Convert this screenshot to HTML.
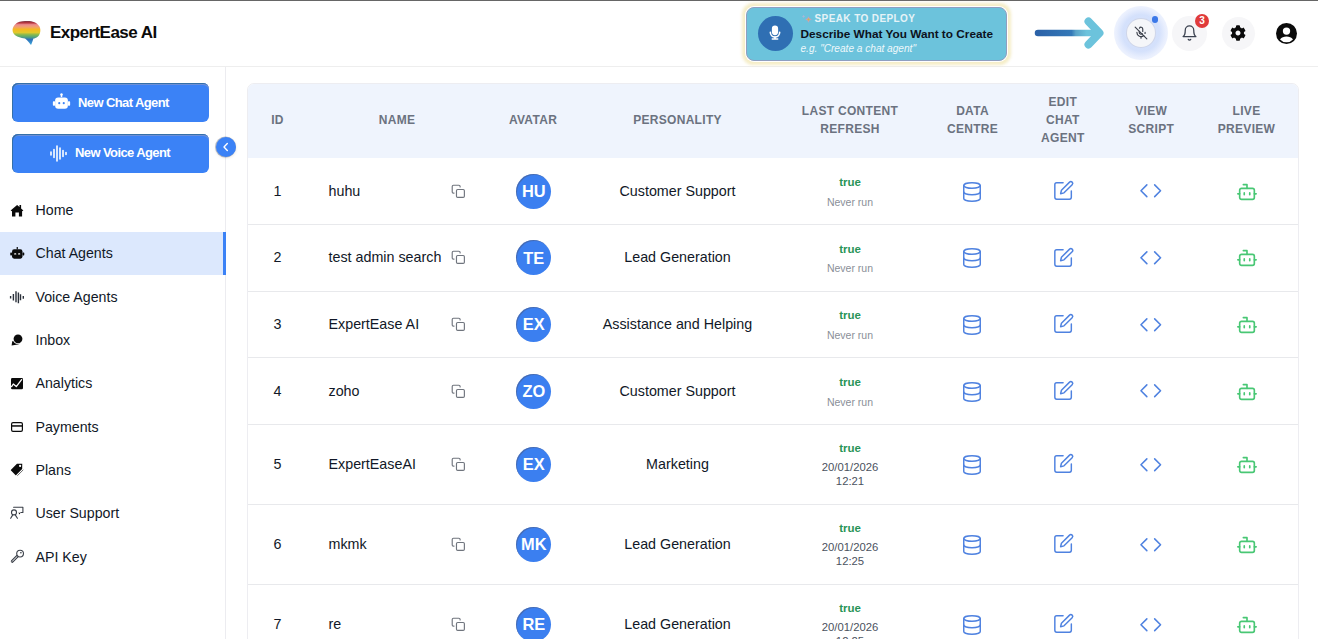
<!DOCTYPE html>
<html><head><meta charset="utf-8">
<style>
*{margin:0;padding:0;box-sizing:border-box}
html,body{width:1318px;height:639px;overflow:hidden;background:#fff;font-family:"Liberation Sans",sans-serif;color:#111827}
.t{position:absolute;white-space:nowrap}
.a{position:absolute}
svg{position:absolute;overflow:visible}
</style></head><body>
<div class="a" style="left:0;top:0;width:1318px;height:1px;background:#666"></div>
<div class="a" style="left:0;top:66px;width:1318px;height:1px;background:#eeeeee"></div>
<svg style="left:11px;top:20px" width="31" height="26" viewBox="0 0 31 26">
<defs><linearGradient id="rb" gradientUnits="userSpaceOnUse" x1="0" y1="1" x2="0" y2="24">
<stop offset="0" stop-color="#7a3848"/><stop offset="0.08" stop-color="#b8343c"/><stop offset="0.16" stop-color="#ec8c8c"/>
<stop offset="0.26" stop-color="#f0a070"/><stop offset="0.36" stop-color="#f5b820"/><stop offset="0.5" stop-color="#e0c82c"/>
<stop offset="0.6" stop-color="#84b850"/><stop offset="0.7" stop-color="#54a47c"/><stop offset="0.8" stop-color="#2f70b8"/><stop offset="1" stop-color="#3aa0d8"/></linearGradient></defs>
<path d="M4 4.5 C7 1 12 0.8 16 1 C21 0.8 26 2.5 28.5 6.5 C30 9.5 29.5 14 27 16.5 C25 18 23.5 18.5 22.5 18.5 C21.5 21 21 23 20 25 C18.5 23 16.5 20.5 14 18.5 C10 18 5 16.5 3 14 C1 11.5 1 7.5 4 4.5 Z" fill="url(#rb)"/>
</svg>
<div class="t" style="left:50px;top:23.41px;font-size:17px;line-height:20.4px;font-weight:bold;color:#0b0b0b;letter-spacing:-0.55px;font-style:normal;">ExpertEase AI</div>
<div class="a" style="left:745px;top:6px;width:263px;height:56px;border-radius:9px;box-shadow:0 0 3px 2.5px rgba(244,236,196,.95)"></div>
<div class="a" style="left:746px;top:7px;width:261px;height:54px;border-radius:8px;background:#6cc3dc;border:1.5px solid #8f9fc0"></div>
<div class="a" style="left:757.5px;top:16px;width:35px;height:35px;border-radius:50%;background:#2f6fb3"></div>
<svg style="left:767px;top:24px" width="16" height="18" viewBox="0 0 24 24" fill="none" stroke="#fff" stroke-width="2.4" stroke-linecap="round">
<rect x="8.5" y="2" width="7" height="12" rx="3.5" fill="#fff"/><path d="M5 11a7 7 0 0 0 14 0"/><path d="M12 18v3M8 21h8"/></svg>
<svg style="left:801px;top:14px" width="12" height="10" viewBox="0 0 12 10"><path d="M7.5 2.2 Q8 5 10.8 5.5 Q8 6 7.5 8.8 Q7 6 4.2 5.5 Q7 5 7.5 2.2Z" fill="#c8a0b8"/><circle cx="7.5" cy="5.5" r="1" fill="#c8c040"/><path d="M2.6 0.8 Q2.8 2.2 4.2 2.4 Q2.8 2.6 2.6 4 Q2.4 2.6 1 2.4 Q2.4 2.2 2.6 0.8Z" fill="#a8b8d8"/></svg>
<div class="t" style="left:814.5px;top:13.04px;font-size:10px;line-height:12.0px;font-weight:bold;color:#e6f3f7;letter-spacing:0.4px;font-style:normal;">SPEAK TO DEPLOY</div>
<div class="t" style="left:800.5px;top:26.63px;font-size:11.8px;line-height:14.16px;font-weight:bold;color:#0c1220;letter-spacing:0px;font-style:normal;">Describe What You Want to Create</div>
<div class="t" style="left:800.5px;top:42.74px;font-size:10.1px;line-height:12.12px;font-weight:normal;color:#eef8fb;letter-spacing:0px;font-style:italic;">e.g. "Create a chat agent"</div>
<svg style="left:1030px;top:14px" width="80" height="38" viewBox="0 0 80 38">
<defs><linearGradient id="ag" gradientUnits="userSpaceOnUse" x1="8" y1="0" x2="69" y2="0">
<stop offset="0" stop-color="#2b62a8"/><stop offset="0.55" stop-color="#3479b8"/><stop offset="0.62" stop-color="#5aa3c8"/><stop offset="0.8" stop-color="#6cc3dc"/><stop offset="1" stop-color="#6cc3dc"/></linearGradient></defs>
<path d="M8 19 H68" stroke="url(#ag)" stroke-width="6.5" stroke-linecap="round" fill="none"/>
<path d="M58.5 7.5 L69.5 19 L58.5 30.5" stroke="#6cc3dc" stroke-width="8" stroke-linecap="round" stroke-linejoin="round" fill="none"/>
</svg>
<div class="a" style="left:1113.5px;top:6px;width:54px;height:54px;border-radius:50%;background:radial-gradient(circle,rgba(170,195,248,.5) 48%,rgba(180,200,250,.3) 64%,rgba(200,215,252,.13) 84%,rgba(225,235,255,0) 100%)"></div>
<div class="a" style="left:1126.5px;top:19px;width:28px;height:28px;border-radius:50%;background:#f5f6f9;box-shadow:0 0 0 1px rgba(205,210,225,.7)"></div>
<svg style="left:1133.5px;top:26px" width="14" height="14" viewBox="0 0 24 24" fill="none" stroke="#3a3f4a" stroke-width="2" stroke-linecap="round">
<path d="M2 2l20 20"/><path d="M18.9 12.9A7 7 0 0 0 19 11"/><path d="M15 9.3V5a3 3 0 0 0-5.7-1.3"/><path d="M9 9v2a3 3 0 0 0 5.1 2.1"/><path d="M5 11a7 7 0 0 0 11.7 5.3"/><path d="M12 18v3"/></svg>
<div class="a" style="left:1151.5px;top:16px;width:6.5px;height:6.5px;border-radius:50%;background:#3b78e8"></div>
<div class="a" style="left:1172px;top:15.5px;width:35px;height:35px;border-radius:50%;background:#f6f6f8"></div>
<svg style="left:1180.5px;top:23.5px" width="17" height="18" viewBox="0 0 24 24" fill="none" stroke="#3b4250" stroke-width="1.8" stroke-linecap="round" stroke-linejoin="round">
<path d="M6 8a6 6 0 0 1 12 0c0 7 3 9 3 9H3s3-2 3-9"/><path d="M10.3 21a1.94 1.94 0 0 0 3.4 0"/></svg>
<div class="a" style="left:1195px;top:14px;width:14px;height:14px;border-radius:50%;background:#e03b3b"></div>
<div class="t" style="left:1002px;width:400px;text-align:center;top:15.04px;font-size:10px;line-height:12.0px;font-weight:bold;color:#fff;letter-spacing:0px;font-style:normal;">3</div>
<div class="a" style="left:1222px;top:16.5px;width:33px;height:33px;border-radius:50%;background:#f6f6f8"></div>
<svg style="left:1230px;top:25px" width="16" height="16" viewBox="0 0 512 512"><path fill="#0b0b0b" d="M487.4 315.7l-42.6-24.6c4.3-23.2 4.3-47 0-70.2l42.6-24.6c4.9-2.8 7.1-8.6 5.5-14-11.1-35.6-30-67.8-54.7-94.6-3.8-4.1-10-5.1-14.8-2.3L380.8 110c-17.9-15.4-38.5-27.3-60.8-35.1V25.8c0-5.6-3.9-10.5-9.4-11.7-36.7-8.2-74.3-7.8-109.2 0-5.5 1.2-9.4 6.1-9.4 11.7V75c-22.2 7.9-42.8 19.8-60.8 35.1L88.7 85.5c-4.9-2.8-11-1.9-14.8 2.3-24.7 26.7-43.6 58.9-54.7 94.6-1.7 5.4.6 11.2 5.5 14L67.3 221c-4.3 23.2-4.3 47 0 70.2l-42.6 24.6c-4.9 2.8-7.1 8.6-5.5 14 11.1 35.6 30 67.8 54.7 94.6 3.8 4.1 10 5.1 14.8 2.3l42.6-24.6c17.9 15.4 38.5 27.3 60.8 35.1v49.2c0 5.6 3.9 10.5 9.4 11.7 36.7 8.2 74.3 7.8 109.2 0 5.5-1.2 9.4-6.1 9.4-11.7v-49.2c22.2-7.9 42.8-19.8 60.8-35.1l42.6 24.6c4.9 2.8 11 1.9 14.8-2.3 24.7-26.7 43.6-58.9 54.7-94.6 1.5-5.5-.7-11.3-5.6-14.1zM256 336c-44.1 0-80-35.9-80-80s35.9-80 80-80 80 35.9 80 80-35.9 80-80 80z"/></svg>
<svg style="left:1275.5px;top:23px" width="21" height="21" viewBox="0 0 24 24"><circle cx="12" cy="12" r="12" fill="#0b0b0b"/>
<circle cx="12" cy="9.2" r="4.2" fill="#fff"/><path d="M4.6 18.8C6.3 16.2 9 15.3 12 15.3s5.7.9 7.4 3.5A10 10 0 0 1 4.6 18.8z" fill="#fff"/></svg>
<div class="a" style="left:225px;top:67px;width:1px;height:572px;background:#ececf0"></div>
<div class="a" style="left:12px;top:83px;width:197px;height:39px;border-radius:6px;background:#3b82f6;box-shadow:inset 1px 1px 0 #3570a8, inset 0 2px 0 #6d8fd8"></div>
<div class="t" style="left:78px;top:95.10px;font-size:13px;line-height:15.6px;font-weight:bold;color:#fff;letter-spacing:-0.6px;font-style:normal;">New Chat Agent</div>
<svg style="left:52px;top:92.5px" width="19" height="18" viewBox="0 0 24 24">
<path d="M12 1.5v4" stroke="#fff" stroke-width="2"/><circle cx="12" cy="2" r="1.6" fill="#fff"/>
<rect x="3.5" y="6" width="17" height="15" rx="4" fill="#fff"/><rect x="0.5" y="11" width="3" height="6" rx="1" fill="#fff"/><rect x="20.5" y="11" width="3" height="6" rx="1" fill="#fff"/>
<circle cx="9" cy="13.5" r="1.4" fill="#3b82f6"/><circle cx="15" cy="13.5" r="1.4" fill="#3b82f6"/></svg>
<div class="a" style="left:12px;top:133.5px;width:197px;height:39px;border-radius:6px;background:#3b82f6;box-shadow:inset 1px 1px 0 #3570a8, inset 0 2px 0 #6d8fd8"></div>
<div class="t" style="left:75px;top:144.80px;font-size:13px;line-height:15.6px;font-weight:bold;color:#fff;letter-spacing:-0.6px;font-style:normal;">New Voice Agent</div>
<svg style="left:50px;top:143.5px" width="18" height="19" viewBox="0 0 18 19" stroke="#fff" stroke-width="1.6" stroke-linecap="round">
<path d="M1 8v3M4 5.5v8M7 2v15M10 4v11M13 6.5v6M16 8.5v2"/></svg>
<div class="a" style="left:215.5px;top:136.5px;width:20.5px;height:20.5px;border-radius:50%;background:#3b82f6;box-shadow:-0.5px 0 0.5px 0.5px rgba(70,75,95,.35), 0 1px 3px rgba(0,0,0,.12)"></div>
<svg style="left:221px;top:142px" width="10" height="10" viewBox="0 0 10 10"><path d="M6.3 1.6L3 5l3.3 3.4" stroke="#fff" stroke-width="1.4" fill="none" stroke-linecap="round" stroke-linejoin="round"/></svg>
<div class="t" style="left:35.5px;top:201.86px;font-size:14.2px;line-height:17.04px;font-weight:normal;color:#111827;letter-spacing:0px;font-style:normal;">Home</div>
<svg style="left:10px;top:204px" width="14" height="13" viewBox="0 0 14 13"><path fill="#0b0b0b" d="M7.1 1 L9.5 3.1 V1.1 H11.1 V4.5 L13.4 6.6 L12.1 7.2 V12.6 H8.9 V8.4 H5.4 V12.6 H2 V7.2 L0.6 6.6 Z"/></svg>
<div class="a" style="left:0;top:231.66px;width:225px;height:43.33px;background:#dce8fd"></div>
<div class="a" style="left:222.5px;top:231.66px;width:3px;height:43.33px;background:#3b82f6"></div>
<div class="t" style="left:35.5px;top:245.19px;font-size:14.2px;line-height:17.04px;font-weight:normal;color:#111827;letter-spacing:0px;font-style:normal;">Chat Agents</div>
<svg style="left:10px;top:247px" width="14.5" height="12" viewBox="0 0 24 20"><rect x="11" y="0" width="2" height="4" fill="#0b0b0b"/><rect x="3.3" y="3.8" width="17.4" height="15.6" rx="3.5" fill="#0b0b0b"/><rect x="0.3" y="9" width="3" height="5" rx="1" fill="#0b0b0b"/><rect x="20.7" y="9" width="3" height="5" rx="1" fill="#0b0b0b"/><rect x="6.8" y="10.3" width="3.6" height="2.4" rx=".8" fill="#fff"/><rect x="13.4" y="10.3" width="3.6" height="2.4" rx=".8" fill="#fff"/></svg>
<div class="t" style="left:35.5px;top:288.52px;font-size:14.2px;line-height:17.04px;font-weight:normal;color:#111827;letter-spacing:0px;font-style:normal;">Voice Agents</div>
<svg style="left:10px;top:290.5px" width="15" height="13" viewBox="0 0 15 13" stroke="#2a303a" stroke-width="1.4"><path d="M0.6 5v2.6M3.4 3v6.5M6 0.2v11M8.4 1.5v10.7M10.5 3.2v6.1M13.3 5v2.7"/></svg>
<div class="t" style="left:35.5px;top:331.86px;font-size:14.2px;line-height:17.04px;font-weight:normal;color:#111827;letter-spacing:0px;font-style:normal;">Inbox</div>
<svg style="left:11px;top:334px" width="12" height="12" viewBox="0 0 12 12"><path d="M3.8 5.2 A3.3 3.3 0 1 1 6.8 10.4 L0.6 11.4 L1.2 7.6 Z" fill="#0b0b0b"/><circle cx="7" cy="4.8" r="5.3" fill="#fff"/><circle cx="7" cy="4.8" r="4.4" fill="#0b0b0b"/></svg>
<div class="t" style="left:35.5px;top:375.19px;font-size:14.2px;line-height:17.04px;font-weight:normal;color:#111827;letter-spacing:0px;font-style:normal;">Analytics</div>
<svg style="left:11px;top:377.5px" width="12" height="11.3" viewBox="0 0 12 11.3"><rect x="0" y="0" width="12" height="11.3" rx="1.2" fill="#0b0b0b"/><path d="M0.6 8.6 L2.3 6 L5.3 8.6 L10.6 1.6" stroke="#fff" stroke-width="1.3" fill="none" stroke-linejoin="round" stroke-linecap="round"/></svg>
<div class="t" style="left:35.5px;top:418.52px;font-size:14.2px;line-height:17.04px;font-weight:normal;color:#111827;letter-spacing:0px;font-style:normal;">Payments</div>
<svg style="left:11px;top:421.5px" width="12" height="10" viewBox="0 0 12 10"><rect x=".6" y=".6" width="10.8" height="8.8" rx="1.4" fill="none" stroke="#0b0b0b" stroke-width="1.2"/><rect x="0.6" y="3.2" width="10.8" height="1.5" fill="#0b0b0b"/></svg>
<div class="t" style="left:35.5px;top:461.85px;font-size:14.2px;line-height:17.04px;font-weight:normal;color:#111827;letter-spacing:0px;font-style:normal;">Plans</div>
<svg style="left:11px;top:461.2px" width="14" height="14" viewBox="0 0 14 14"><g transform="rotate(-45 7 7)"><path d="M0.8 3.3 H9.2 L13 7 L9.2 10.7 H0.8 Q0.2 10.7 0.2 10.1 V3.9 Q0.2 3.3 0.8 3.3 Z" fill="#0b0b0b"/><circle cx="10" cy="7" r="1.1" fill="#fff"/><path d="M1 12 H9.5" stroke="#666" stroke-width="0.9"/></g></svg>
<div class="t" style="left:35.5px;top:505.19px;font-size:14.2px;line-height:17.04px;font-weight:normal;color:#111827;letter-spacing:0px;font-style:normal;">User Support</div>
<svg style="left:10px;top:506px" width="14" height="14" viewBox="0 0 14 14" fill="none" stroke="#3a3f48" stroke-width="1.1" stroke-linecap="round" stroke-linejoin="round"><path d="M3.6 1.2 H12.9 V6.5 H10.8"/><path d="M8.5 6.6 L10.4 7.1 L9.3 8.6 Z" fill="#0b0b0b" stroke="none"/><circle cx="4" cy="6.4" r="2.5"/><path d="M2.6 9.1 L0.7 12.3 M5.4 9.1 L7.4 12.3"/></svg>
<div class="t" style="left:35.5px;top:548.52px;font-size:14.2px;line-height:17.04px;font-weight:normal;color:#111827;letter-spacing:0px;font-style:normal;">API Key</div>
<svg style="left:10.5px;top:549px" width="13" height="14" viewBox="0 0 13 14" fill="none" stroke-linecap="round" stroke-linejoin="round"><path d="M6.3 7.3 L1.3 12.3" stroke="#3a3f48" stroke-width="3"/><path d="M6.3 7.3 L1.3 12.3" stroke="#fff" stroke-width="1"/><circle cx="9.1" cy="4.6" r="3.9" fill="#3a3f48"/><circle cx="9.1" cy="4.6" r="2.8" fill="#fff"/><circle cx="9.9" cy="3.8" r=".8" fill="#2a2f38"/></svg>
<div class="a" style="left:247px;top:83px;width:1052px;height:600px;border:1px solid #ededf1;border-radius:7px 7px 0 0;background:#fff"></div>
<div class="a" style="left:248px;top:84px;width:1050px;height:74px;border-radius:6px 6px 0 0;background:#eff4fd"></div>
<div class="t" style="left:77.5px;width:400px;text-align:center;top:113.24px;font-size:12px;line-height:14.4px;font-weight:bold;color:#6b7280;letter-spacing:0.3px;font-style:normal;">ID</div>
<div class="t" style="left:197px;width:400px;text-align:center;top:113.24px;font-size:12px;line-height:14.4px;font-weight:bold;color:#6b7280;letter-spacing:0.3px;font-style:normal;">NAME</div>
<div class="t" style="left:333px;width:400px;text-align:center;top:113.24px;font-size:12px;line-height:14.4px;font-weight:bold;color:#6b7280;letter-spacing:0.3px;font-style:normal;">AVATAR</div>
<div class="t" style="left:477.5px;width:400px;text-align:center;top:113.24px;font-size:12px;line-height:14.4px;font-weight:bold;color:#6b7280;letter-spacing:0.3px;font-style:normal;">PERSONALITY</div>
<div class="t" style="left:650px;width:400px;text-align:center;top:104.24px;font-size:12px;line-height:14.4px;font-weight:bold;color:#6b7280;letter-spacing:0.3px;font-style:normal;">LAST CONTENT</div>
<div class="t" style="left:650px;width:400px;text-align:center;top:122.24px;font-size:12px;line-height:14.4px;font-weight:bold;color:#6b7280;letter-spacing:0.3px;font-style:normal;">REFRESH</div>
<div class="t" style="left:772.5px;width:400px;text-align:center;top:104.24px;font-size:12px;line-height:14.4px;font-weight:bold;color:#6b7280;letter-spacing:0.3px;font-style:normal;">DATA</div>
<div class="t" style="left:772.5px;width:400px;text-align:center;top:122.24px;font-size:12px;line-height:14.4px;font-weight:bold;color:#6b7280;letter-spacing:0.3px;font-style:normal;">CENTRE</div>
<div class="t" style="left:862.8px;width:400px;text-align:center;top:95.24px;font-size:12px;line-height:14.4px;font-weight:bold;color:#6b7280;letter-spacing:0.3px;font-style:normal;">EDIT</div>
<div class="t" style="left:862.8px;width:400px;text-align:center;top:113.24px;font-size:12px;line-height:14.4px;font-weight:bold;color:#6b7280;letter-spacing:0.3px;font-style:normal;">CHAT</div>
<div class="t" style="left:862.8px;width:400px;text-align:center;top:131.24px;font-size:12px;line-height:14.4px;font-weight:bold;color:#6b7280;letter-spacing:0.3px;font-style:normal;">AGENT</div>
<div class="t" style="left:951.2px;width:400px;text-align:center;top:104.24px;font-size:12px;line-height:14.4px;font-weight:bold;color:#6b7280;letter-spacing:0.3px;font-style:normal;">VIEW</div>
<div class="t" style="left:951.2px;width:400px;text-align:center;top:122.24px;font-size:12px;line-height:14.4px;font-weight:bold;color:#6b7280;letter-spacing:0.3px;font-style:normal;">SCRIPT</div>
<div class="t" style="left:1046.5px;width:400px;text-align:center;top:104.24px;font-size:12px;line-height:14.4px;font-weight:bold;color:#6b7280;letter-spacing:0.3px;font-style:normal;">LIVE</div>
<div class="t" style="left:1046.5px;width:400px;text-align:center;top:122.24px;font-size:12px;line-height:14.4px;font-weight:bold;color:#6b7280;letter-spacing:0.3px;font-style:normal;">PREVIEW</div>
<div class="t" style="left:77.5px;width:400px;text-align:center;top:182.77px;font-size:14.3px;line-height:17.16px;font-weight:normal;color:#111827;letter-spacing:0px;font-style:normal;">1</div>
<div class="t" style="left:328.5px;top:182.77px;font-size:14.3px;line-height:17.16px;font-weight:normal;color:#111827;letter-spacing:0px;font-style:normal;">huhu</div>
<svg style="left:450.5px;top:183.70px" width="14.6" height="14.6" viewBox="0 0 24 24" fill="none" stroke="#70757e" stroke-width="1.9" stroke-linecap="round" stroke-linejoin="round"><rect x="9" y="9" width="13" height="13" rx="2"/><path d="M5 15H4a2 2 0 0 1-2-2V4a2 2 0 0 1 2-2h9a2 2 0 0 1 2 2v1"/></svg>
<div class="a" style="left:516px;top:173.50px;width:35px;height:35px;border-radius:50%;background:#3b7ff0;box-shadow:inset 1px 1px 0 rgba(80,85,110,.45)"></div>
<div class="t" style="left:333.79999999999995px;width:400px;text-align:center;top:181.88px;font-size:16.4px;line-height:19.68px;font-weight:bold;color:#fff;letter-spacing:0px;font-style:normal;">HU</div>
<div class="t" style="left:477.5px;width:400px;text-align:center;top:182.77px;font-size:14.3px;line-height:17.16px;font-weight:normal;color:#111827;letter-spacing:0px;font-style:normal;">Customer Support</div>
<div class="t" style="left:650px;width:400px;text-align:center;top:176.12px;font-size:11.5px;line-height:13.8px;font-weight:bold;color:#2a9458;letter-spacing:0px;font-style:normal;">true</div>
<div class="t" style="left:650px;width:400px;text-align:center;top:195.67px;font-size:10.5px;line-height:12.6px;font-weight:normal;color:#8a8f98;letter-spacing:0px;font-style:normal;">Never run</div>
<svg style="left:961.30px;top:180.50px" width="22" height="22" viewBox="0 0 24 24" fill="none" stroke="#4f82e0" stroke-width="1.6" stroke-linecap="round" stroke-linejoin="round"><ellipse cx="12" cy="5" rx="9" ry="3"/><path d="M3 5V19A9 3 0 0 0 21 19V5"/><path d="M3 12A9 3 0 0 0 21 12"/></svg>
<svg style="left:1052.90px;top:179.00px" width="22" height="22" viewBox="0 0 24 24" fill="none" stroke="#4f82e0" stroke-width="1.6" stroke-linecap="round" stroke-linejoin="round"><path d="M11 4H4a2 2 0 0 0-2 2v14a2 2 0 0 0 2 2h14a2 2 0 0 0 2-2v-7"/><path d="M18.1 3.4a1.98 1.98 0 0 1 2.8 2.8L12 15.1l-3.7 0.9 0.9-3.7 8.9-8.9z"/></svg>
<svg style="left:1139.35px;top:179.25px" width="23.5" height="23.5" viewBox="0 0 24 24" fill="none" stroke="#4f82e0" stroke-width="1.6" stroke-linecap="round" stroke-linejoin="round"><polyline points="16 18 22 12 16 6"/><polyline points="8 6 2 12 8 18"/></svg>
<svg style="left:1235.60px;top:180.50px" width="22" height="22" viewBox="0 0 24 24" fill="none" stroke="#48c774" stroke-width="1.8" stroke-linecap="round" stroke-linejoin="round"><path d="M12 8V4H8"/><rect width="16" height="12" x="4" y="8" rx="2"/><path d="M2 14h2"/><path d="M20 14h2"/><path d="M15 13v2"/><path d="M9 13v2"/></svg>
<div class="a" style="left:248px;top:223.84px;width:1050px;height:1px;background:#e8e9ec"></div>
<div class="t" style="left:77.5px;width:400px;text-align:center;top:249.44px;font-size:14.3px;line-height:17.16px;font-weight:normal;color:#111827;letter-spacing:0px;font-style:normal;">2</div>
<div class="t" style="left:328.5px;top:249.44px;font-size:14.3px;line-height:17.16px;font-weight:normal;color:#111827;letter-spacing:0px;font-style:normal;">test admin search</div>
<svg style="left:450.5px;top:250.37px" width="14.6" height="14.6" viewBox="0 0 24 24" fill="none" stroke="#70757e" stroke-width="1.9" stroke-linecap="round" stroke-linejoin="round"><rect x="9" y="9" width="13" height="13" rx="2"/><path d="M5 15H4a2 2 0 0 1-2-2V4a2 2 0 0 1 2-2h9a2 2 0 0 1 2 2v1"/></svg>
<div class="a" style="left:516px;top:240.17px;width:35px;height:35px;border-radius:50%;background:#3b7ff0;box-shadow:inset 1px 1px 0 rgba(80,85,110,.45)"></div>
<div class="t" style="left:333.79999999999995px;width:400px;text-align:center;top:248.55px;font-size:16.4px;line-height:19.68px;font-weight:bold;color:#fff;letter-spacing:0px;font-style:normal;">TE</div>
<div class="t" style="left:477.5px;width:400px;text-align:center;top:249.44px;font-size:14.3px;line-height:17.16px;font-weight:normal;color:#111827;letter-spacing:0px;font-style:normal;">Lead Generation</div>
<div class="t" style="left:650px;width:400px;text-align:center;top:242.79px;font-size:11.5px;line-height:13.8px;font-weight:bold;color:#2a9458;letter-spacing:0px;font-style:normal;">true</div>
<div class="t" style="left:650px;width:400px;text-align:center;top:262.34px;font-size:10.5px;line-height:12.6px;font-weight:normal;color:#8a8f98;letter-spacing:0px;font-style:normal;">Never run</div>
<svg style="left:961.30px;top:247.17px" width="22" height="22" viewBox="0 0 24 24" fill="none" stroke="#4f82e0" stroke-width="1.6" stroke-linecap="round" stroke-linejoin="round"><ellipse cx="12" cy="5" rx="9" ry="3"/><path d="M3 5V19A9 3 0 0 0 21 19V5"/><path d="M3 12A9 3 0 0 0 21 12"/></svg>
<svg style="left:1052.90px;top:245.67px" width="22" height="22" viewBox="0 0 24 24" fill="none" stroke="#4f82e0" stroke-width="1.6" stroke-linecap="round" stroke-linejoin="round"><path d="M11 4H4a2 2 0 0 0-2 2v14a2 2 0 0 0 2 2h14a2 2 0 0 0 2-2v-7"/><path d="M18.1 3.4a1.98 1.98 0 0 1 2.8 2.8L12 15.1l-3.7 0.9 0.9-3.7 8.9-8.9z"/></svg>
<svg style="left:1139.35px;top:245.92px" width="23.5" height="23.5" viewBox="0 0 24 24" fill="none" stroke="#4f82e0" stroke-width="1.6" stroke-linecap="round" stroke-linejoin="round"><polyline points="16 18 22 12 16 6"/><polyline points="8 6 2 12 8 18"/></svg>
<svg style="left:1235.60px;top:247.17px" width="22" height="22" viewBox="0 0 24 24" fill="none" stroke="#48c774" stroke-width="1.8" stroke-linecap="round" stroke-linejoin="round"><path d="M12 8V4H8"/><rect width="16" height="12" x="4" y="8" rx="2"/><path d="M2 14h2"/><path d="M20 14h2"/><path d="M15 13v2"/><path d="M9 13v2"/></svg>
<div class="a" style="left:248px;top:290.51px;width:1050px;height:1px;background:#e8e9ec"></div>
<div class="t" style="left:77.5px;width:400px;text-align:center;top:316.11px;font-size:14.3px;line-height:17.16px;font-weight:normal;color:#111827;letter-spacing:0px;font-style:normal;">3</div>
<div class="t" style="left:328.5px;top:316.11px;font-size:14.3px;line-height:17.16px;font-weight:normal;color:#111827;letter-spacing:0px;font-style:normal;">ExpertEase AI</div>
<svg style="left:450.5px;top:317.04px" width="14.6" height="14.6" viewBox="0 0 24 24" fill="none" stroke="#70757e" stroke-width="1.9" stroke-linecap="round" stroke-linejoin="round"><rect x="9" y="9" width="13" height="13" rx="2"/><path d="M5 15H4a2 2 0 0 1-2-2V4a2 2 0 0 1 2-2h9a2 2 0 0 1 2 2v1"/></svg>
<div class="a" style="left:516px;top:306.84px;width:35px;height:35px;border-radius:50%;background:#3b7ff0;box-shadow:inset 1px 1px 0 rgba(80,85,110,.45)"></div>
<div class="t" style="left:333.79999999999995px;width:400px;text-align:center;top:315.22px;font-size:16.4px;line-height:19.68px;font-weight:bold;color:#fff;letter-spacing:0px;font-style:normal;">EX</div>
<div class="t" style="left:477.5px;width:400px;text-align:center;top:316.11px;font-size:14.3px;line-height:17.16px;font-weight:normal;color:#111827;letter-spacing:0px;font-style:normal;">Assistance and Helping</div>
<div class="t" style="left:650px;width:400px;text-align:center;top:309.46px;font-size:11.5px;line-height:13.8px;font-weight:bold;color:#2a9458;letter-spacing:0px;font-style:normal;">true</div>
<div class="t" style="left:650px;width:400px;text-align:center;top:329.01px;font-size:10.5px;line-height:12.6px;font-weight:normal;color:#8a8f98;letter-spacing:0px;font-style:normal;">Never run</div>
<svg style="left:961.30px;top:313.84px" width="22" height="22" viewBox="0 0 24 24" fill="none" stroke="#4f82e0" stroke-width="1.6" stroke-linecap="round" stroke-linejoin="round"><ellipse cx="12" cy="5" rx="9" ry="3"/><path d="M3 5V19A9 3 0 0 0 21 19V5"/><path d="M3 12A9 3 0 0 0 21 12"/></svg>
<svg style="left:1052.90px;top:312.34px" width="22" height="22" viewBox="0 0 24 24" fill="none" stroke="#4f82e0" stroke-width="1.6" stroke-linecap="round" stroke-linejoin="round"><path d="M11 4H4a2 2 0 0 0-2 2v14a2 2 0 0 0 2 2h14a2 2 0 0 0 2-2v-7"/><path d="M18.1 3.4a1.98 1.98 0 0 1 2.8 2.8L12 15.1l-3.7 0.9 0.9-3.7 8.9-8.9z"/></svg>
<svg style="left:1139.35px;top:312.59px" width="23.5" height="23.5" viewBox="0 0 24 24" fill="none" stroke="#4f82e0" stroke-width="1.6" stroke-linecap="round" stroke-linejoin="round"><polyline points="16 18 22 12 16 6"/><polyline points="8 6 2 12 8 18"/></svg>
<svg style="left:1235.60px;top:313.84px" width="22" height="22" viewBox="0 0 24 24" fill="none" stroke="#48c774" stroke-width="1.8" stroke-linecap="round" stroke-linejoin="round"><path d="M12 8V4H8"/><rect width="16" height="12" x="4" y="8" rx="2"/><path d="M2 14h2"/><path d="M20 14h2"/><path d="M15 13v2"/><path d="M9 13v2"/></svg>
<div class="a" style="left:248px;top:357.18px;width:1050px;height:1px;background:#e8e9ec"></div>
<div class="t" style="left:77.5px;width:400px;text-align:center;top:382.78px;font-size:14.3px;line-height:17.16px;font-weight:normal;color:#111827;letter-spacing:0px;font-style:normal;">4</div>
<div class="t" style="left:328.5px;top:382.78px;font-size:14.3px;line-height:17.16px;font-weight:normal;color:#111827;letter-spacing:0px;font-style:normal;">zoho</div>
<svg style="left:450.5px;top:383.71px" width="14.6" height="14.6" viewBox="0 0 24 24" fill="none" stroke="#70757e" stroke-width="1.9" stroke-linecap="round" stroke-linejoin="round"><rect x="9" y="9" width="13" height="13" rx="2"/><path d="M5 15H4a2 2 0 0 1-2-2V4a2 2 0 0 1 2-2h9a2 2 0 0 1 2 2v1"/></svg>
<div class="a" style="left:516px;top:373.51px;width:35px;height:35px;border-radius:50%;background:#3b7ff0;box-shadow:inset 1px 1px 0 rgba(80,85,110,.45)"></div>
<div class="t" style="left:333.79999999999995px;width:400px;text-align:center;top:381.89px;font-size:16.4px;line-height:19.68px;font-weight:bold;color:#fff;letter-spacing:0px;font-style:normal;">ZO</div>
<div class="t" style="left:477.5px;width:400px;text-align:center;top:382.78px;font-size:14.3px;line-height:17.16px;font-weight:normal;color:#111827;letter-spacing:0px;font-style:normal;">Customer Support</div>
<div class="t" style="left:650px;width:400px;text-align:center;top:376.13px;font-size:11.5px;line-height:13.8px;font-weight:bold;color:#2a9458;letter-spacing:0px;font-style:normal;">true</div>
<div class="t" style="left:650px;width:400px;text-align:center;top:395.68px;font-size:10.5px;line-height:12.6px;font-weight:normal;color:#8a8f98;letter-spacing:0px;font-style:normal;">Never run</div>
<svg style="left:961.30px;top:380.51px" width="22" height="22" viewBox="0 0 24 24" fill="none" stroke="#4f82e0" stroke-width="1.6" stroke-linecap="round" stroke-linejoin="round"><ellipse cx="12" cy="5" rx="9" ry="3"/><path d="M3 5V19A9 3 0 0 0 21 19V5"/><path d="M3 12A9 3 0 0 0 21 12"/></svg>
<svg style="left:1052.90px;top:379.01px" width="22" height="22" viewBox="0 0 24 24" fill="none" stroke="#4f82e0" stroke-width="1.6" stroke-linecap="round" stroke-linejoin="round"><path d="M11 4H4a2 2 0 0 0-2 2v14a2 2 0 0 0 2 2h14a2 2 0 0 0 2-2v-7"/><path d="M18.1 3.4a1.98 1.98 0 0 1 2.8 2.8L12 15.1l-3.7 0.9 0.9-3.7 8.9-8.9z"/></svg>
<svg style="left:1139.35px;top:379.26px" width="23.5" height="23.5" viewBox="0 0 24 24" fill="none" stroke="#4f82e0" stroke-width="1.6" stroke-linecap="round" stroke-linejoin="round"><polyline points="16 18 22 12 16 6"/><polyline points="8 6 2 12 8 18"/></svg>
<svg style="left:1235.60px;top:380.51px" width="22" height="22" viewBox="0 0 24 24" fill="none" stroke="#48c774" stroke-width="1.8" stroke-linecap="round" stroke-linejoin="round"><path d="M12 8V4H8"/><rect width="16" height="12" x="4" y="8" rx="2"/><path d="M2 14h2"/><path d="M20 14h2"/><path d="M15 13v2"/><path d="M9 13v2"/></svg>
<div class="a" style="left:248px;top:423.85px;width:1050px;height:1px;background:#e8e9ec"></div>
<div class="t" style="left:77.5px;width:400px;text-align:center;top:456.12px;font-size:14.3px;line-height:17.16px;font-weight:normal;color:#111827;letter-spacing:0px;font-style:normal;">5</div>
<div class="t" style="left:328.5px;top:456.12px;font-size:14.3px;line-height:17.16px;font-weight:normal;color:#111827;letter-spacing:0px;font-style:normal;">ExpertEaseAI</div>
<svg style="left:450.5px;top:457.05px" width="14.6" height="14.6" viewBox="0 0 24 24" fill="none" stroke="#70757e" stroke-width="1.9" stroke-linecap="round" stroke-linejoin="round"><rect x="9" y="9" width="13" height="13" rx="2"/><path d="M5 15H4a2 2 0 0 1-2-2V4a2 2 0 0 1 2-2h9a2 2 0 0 1 2 2v1"/></svg>
<div class="a" style="left:516px;top:446.85px;width:35px;height:35px;border-radius:50%;background:#3b7ff0;box-shadow:inset 1px 1px 0 rgba(80,85,110,.45)"></div>
<div class="t" style="left:333.79999999999995px;width:400px;text-align:center;top:455.23px;font-size:16.4px;line-height:19.68px;font-weight:bold;color:#fff;letter-spacing:0px;font-style:normal;">EX</div>
<div class="t" style="left:477.5px;width:400px;text-align:center;top:456.12px;font-size:14.3px;line-height:17.16px;font-weight:normal;color:#111827;letter-spacing:0px;font-style:normal;">Marketing</div>
<div class="t" style="left:650px;width:400px;text-align:center;top:442.47px;font-size:11.5px;line-height:13.8px;font-weight:bold;color:#2a9458;letter-spacing:0px;font-style:normal;">true</div>
<div class="t" style="left:650px;width:400px;text-align:center;top:461.05px;font-size:11.3px;line-height:13.56px;font-weight:normal;color:#4b5260;letter-spacing:0px;font-style:normal;">20/01/2026</div>
<div class="t" style="left:650px;width:400px;text-align:center;top:475.15px;font-size:11.3px;line-height:13.56px;font-weight:normal;color:#4b5260;letter-spacing:0px;font-style:normal;">12:21</div>
<svg style="left:961.30px;top:453.85px" width="22" height="22" viewBox="0 0 24 24" fill="none" stroke="#4f82e0" stroke-width="1.6" stroke-linecap="round" stroke-linejoin="round"><ellipse cx="12" cy="5" rx="9" ry="3"/><path d="M3 5V19A9 3 0 0 0 21 19V5"/><path d="M3 12A9 3 0 0 0 21 12"/></svg>
<svg style="left:1052.90px;top:452.35px" width="22" height="22" viewBox="0 0 24 24" fill="none" stroke="#4f82e0" stroke-width="1.6" stroke-linecap="round" stroke-linejoin="round"><path d="M11 4H4a2 2 0 0 0-2 2v14a2 2 0 0 0 2 2h14a2 2 0 0 0 2-2v-7"/><path d="M18.1 3.4a1.98 1.98 0 0 1 2.8 2.8L12 15.1l-3.7 0.9 0.9-3.7 8.9-8.9z"/></svg>
<svg style="left:1139.35px;top:452.60px" width="23.5" height="23.5" viewBox="0 0 24 24" fill="none" stroke="#4f82e0" stroke-width="1.6" stroke-linecap="round" stroke-linejoin="round"><polyline points="16 18 22 12 16 6"/><polyline points="8 6 2 12 8 18"/></svg>
<svg style="left:1235.60px;top:453.85px" width="22" height="22" viewBox="0 0 24 24" fill="none" stroke="#48c774" stroke-width="1.8" stroke-linecap="round" stroke-linejoin="round"><path d="M12 8V4H8"/><rect width="16" height="12" x="4" y="8" rx="2"/><path d="M2 14h2"/><path d="M20 14h2"/><path d="M15 13v2"/><path d="M9 13v2"/></svg>
<div class="a" style="left:248px;top:503.85px;width:1050px;height:1px;background:#e8e9ec"></div>
<div class="t" style="left:77.5px;width:400px;text-align:center;top:536.12px;font-size:14.3px;line-height:17.16px;font-weight:normal;color:#111827;letter-spacing:0px;font-style:normal;">6</div>
<div class="t" style="left:328.5px;top:536.12px;font-size:14.3px;line-height:17.16px;font-weight:normal;color:#111827;letter-spacing:0px;font-style:normal;">mkmk</div>
<svg style="left:450.5px;top:537.05px" width="14.6" height="14.6" viewBox="0 0 24 24" fill="none" stroke="#70757e" stroke-width="1.9" stroke-linecap="round" stroke-linejoin="round"><rect x="9" y="9" width="13" height="13" rx="2"/><path d="M5 15H4a2 2 0 0 1-2-2V4a2 2 0 0 1 2-2h9a2 2 0 0 1 2 2v1"/></svg>
<div class="a" style="left:516px;top:526.85px;width:35px;height:35px;border-radius:50%;background:#3b7ff0;box-shadow:inset 1px 1px 0 rgba(80,85,110,.45)"></div>
<div class="t" style="left:333.79999999999995px;width:400px;text-align:center;top:535.23px;font-size:16.4px;line-height:19.68px;font-weight:bold;color:#fff;letter-spacing:0px;font-style:normal;">MK</div>
<div class="t" style="left:477.5px;width:400px;text-align:center;top:536.12px;font-size:14.3px;line-height:17.16px;font-weight:normal;color:#111827;letter-spacing:0px;font-style:normal;">Lead Generation</div>
<div class="t" style="left:650px;width:400px;text-align:center;top:522.47px;font-size:11.5px;line-height:13.8px;font-weight:bold;color:#2a9458;letter-spacing:0px;font-style:normal;">true</div>
<div class="t" style="left:650px;width:400px;text-align:center;top:541.05px;font-size:11.3px;line-height:13.56px;font-weight:normal;color:#4b5260;letter-spacing:0px;font-style:normal;">20/01/2026</div>
<div class="t" style="left:650px;width:400px;text-align:center;top:555.15px;font-size:11.3px;line-height:13.56px;font-weight:normal;color:#4b5260;letter-spacing:0px;font-style:normal;">12:25</div>
<svg style="left:961.30px;top:533.85px" width="22" height="22" viewBox="0 0 24 24" fill="none" stroke="#4f82e0" stroke-width="1.6" stroke-linecap="round" stroke-linejoin="round"><ellipse cx="12" cy="5" rx="9" ry="3"/><path d="M3 5V19A9 3 0 0 0 21 19V5"/><path d="M3 12A9 3 0 0 0 21 12"/></svg>
<svg style="left:1052.90px;top:532.35px" width="22" height="22" viewBox="0 0 24 24" fill="none" stroke="#4f82e0" stroke-width="1.6" stroke-linecap="round" stroke-linejoin="round"><path d="M11 4H4a2 2 0 0 0-2 2v14a2 2 0 0 0 2 2h14a2 2 0 0 0 2-2v-7"/><path d="M18.1 3.4a1.98 1.98 0 0 1 2.8 2.8L12 15.1l-3.7 0.9 0.9-3.7 8.9-8.9z"/></svg>
<svg style="left:1139.35px;top:532.60px" width="23.5" height="23.5" viewBox="0 0 24 24" fill="none" stroke="#4f82e0" stroke-width="1.6" stroke-linecap="round" stroke-linejoin="round"><polyline points="16 18 22 12 16 6"/><polyline points="8 6 2 12 8 18"/></svg>
<svg style="left:1235.60px;top:533.85px" width="22" height="22" viewBox="0 0 24 24" fill="none" stroke="#48c774" stroke-width="1.8" stroke-linecap="round" stroke-linejoin="round"><path d="M12 8V4H8"/><rect width="16" height="12" x="4" y="8" rx="2"/><path d="M2 14h2"/><path d="M20 14h2"/><path d="M15 13v2"/><path d="M9 13v2"/></svg>
<div class="a" style="left:248px;top:583.85px;width:1050px;height:1px;background:#e8e9ec"></div>
<div class="t" style="left:77.5px;width:400px;text-align:center;top:616.12px;font-size:14.3px;line-height:17.16px;font-weight:normal;color:#111827;letter-spacing:0px;font-style:normal;">7</div>
<div class="t" style="left:328.5px;top:616.12px;font-size:14.3px;line-height:17.16px;font-weight:normal;color:#111827;letter-spacing:0px;font-style:normal;">re</div>
<svg style="left:450.5px;top:617.05px" width="14.6" height="14.6" viewBox="0 0 24 24" fill="none" stroke="#70757e" stroke-width="1.9" stroke-linecap="round" stroke-linejoin="round"><rect x="9" y="9" width="13" height="13" rx="2"/><path d="M5 15H4a2 2 0 0 1-2-2V4a2 2 0 0 1 2-2h9a2 2 0 0 1 2 2v1"/></svg>
<div class="a" style="left:516px;top:606.85px;width:35px;height:35px;border-radius:50%;background:#3b7ff0;box-shadow:inset 1px 1px 0 rgba(80,85,110,.45)"></div>
<div class="t" style="left:333.79999999999995px;width:400px;text-align:center;top:615.23px;font-size:16.4px;line-height:19.68px;font-weight:bold;color:#fff;letter-spacing:0px;font-style:normal;">RE</div>
<div class="t" style="left:477.5px;width:400px;text-align:center;top:616.12px;font-size:14.3px;line-height:17.16px;font-weight:normal;color:#111827;letter-spacing:0px;font-style:normal;">Lead Generation</div>
<div class="t" style="left:650px;width:400px;text-align:center;top:602.47px;font-size:11.5px;line-height:13.8px;font-weight:bold;color:#2a9458;letter-spacing:0px;font-style:normal;">true</div>
<div class="t" style="left:650px;width:400px;text-align:center;top:621.05px;font-size:11.3px;line-height:13.56px;font-weight:normal;color:#4b5260;letter-spacing:0px;font-style:normal;">20/01/2026</div>
<div class="t" style="left:650px;width:400px;text-align:center;top:635.15px;font-size:11.3px;line-height:13.56px;font-weight:normal;color:#4b5260;letter-spacing:0px;font-style:normal;">12:25</div>
<svg style="left:961.30px;top:613.85px" width="22" height="22" viewBox="0 0 24 24" fill="none" stroke="#4f82e0" stroke-width="1.6" stroke-linecap="round" stroke-linejoin="round"><ellipse cx="12" cy="5" rx="9" ry="3"/><path d="M3 5V19A9 3 0 0 0 21 19V5"/><path d="M3 12A9 3 0 0 0 21 12"/></svg>
<svg style="left:1052.90px;top:612.35px" width="22" height="22" viewBox="0 0 24 24" fill="none" stroke="#4f82e0" stroke-width="1.6" stroke-linecap="round" stroke-linejoin="round"><path d="M11 4H4a2 2 0 0 0-2 2v14a2 2 0 0 0 2 2h14a2 2 0 0 0 2-2v-7"/><path d="M18.1 3.4a1.98 1.98 0 0 1 2.8 2.8L12 15.1l-3.7 0.9 0.9-3.7 8.9-8.9z"/></svg>
<svg style="left:1139.35px;top:612.60px" width="23.5" height="23.5" viewBox="0 0 24 24" fill="none" stroke="#4f82e0" stroke-width="1.6" stroke-linecap="round" stroke-linejoin="round"><polyline points="16 18 22 12 16 6"/><polyline points="8 6 2 12 8 18"/></svg>
<svg style="left:1235.60px;top:613.85px" width="22" height="22" viewBox="0 0 24 24" fill="none" stroke="#48c774" stroke-width="1.8" stroke-linecap="round" stroke-linejoin="round"><path d="M12 8V4H8"/><rect width="16" height="12" x="4" y="8" rx="2"/><path d="M2 14h2"/><path d="M20 14h2"/><path d="M15 13v2"/><path d="M9 13v2"/></svg>
</body></html>
